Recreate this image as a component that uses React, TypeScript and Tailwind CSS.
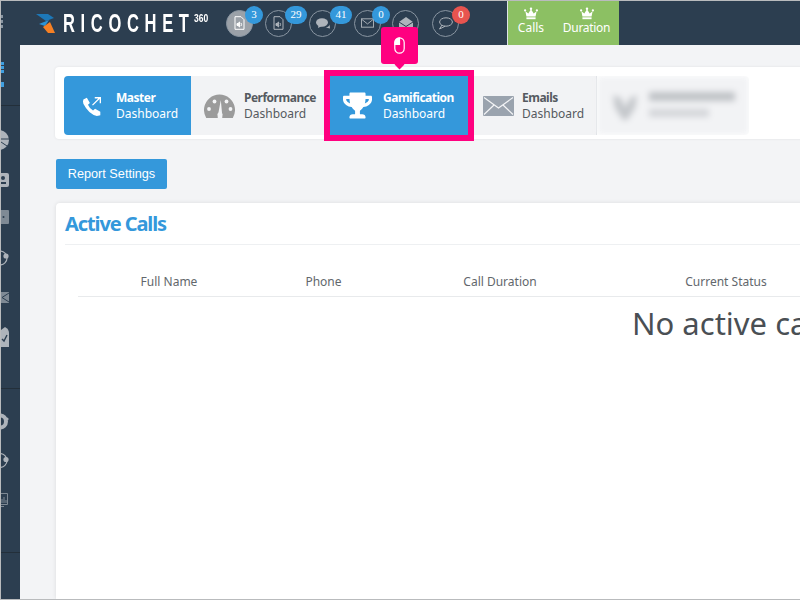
import { FaTrophy } from "react-icons/fa";

const asap = "font-['Noto_Sans',sans-serif]";

function Crown() {
  return (
    <svg width="14" height="13" viewBox="0 0 15 13" fill="#fff">
      <circle cx="7.5" cy="1.4" r="1.3" />
      <circle cx="1.2" cy="3.2" r="1.2" />
      <circle cx="13.8" cy="3.2" r="1.2" />
      <path d="M1.5 4 L4.6 6.6 L7.5 2 L10.4 6.6 L13.5 4 L12.4 9.6 H2.6 Z" />
      <rect x="2.6" y="10.6" width="9.8" height="2" />
    </svg>
  );
}

function FileAudio({ color }: { color: string }) {
  return (
    <svg width="11" height="14" viewBox="0 0 11 14" fill="none" stroke={color} strokeWidth="1">
      <path d="M1 .7 H7 L10 3.7 V13.3 H1 Z" />
      <path d="M3 7.5 H4 L5.6 6 V11 L4 9.5 H3 Z" fill={color} />
      <path d="M7 7 Q8.2 8.5 7 10" />
    </svg>
  );
}

function Mail({ color }: { color: string }) {
  return (
    <svg width="13" height="10" viewBox="0 0 14 10" fill="none" stroke={color} strokeWidth="1">
      <rect x=".5" y=".5" width="13" height="9" />
      <path d="M.5 .8 L7 6 L13.5 .8" />
    </svg>
  );
}

function OpenMail() {
  return (
    <svg width="14" height="13" viewBox="0 0 14 13" fill="#aeb4bb">
      <path d="M0 5 L7 0 L14 5 V13 H0 Z" />
      <path d="M0 5 L7 9.5 L14 5" fill="none" stroke="#2c3e50" strokeWidth="1" />
    </svg>
  );
}

function Bubbles() {
  return (
    <svg width="14" height="11" viewBox="0 0 14 11" fill="#aeb4bb">
      <ellipse cx="6" cy="4.5" rx="6" ry="4.2" />
      <path d="M2.5 7 L2 10 L6 8 Z" />
      <path d="M9.5 9.5 Q13 9 13.6 6.5 L14 10.5 Z" />
    </svg>
  );
}

function Bubble() {
  return (
    <svg width="15" height="13" viewBox="0 0 15 13" fill="none" stroke="#aeb4bb" strokeWidth="1">
      <ellipse cx="8" cy="5" rx="6.4" ry="4.2" />
      <path d="M4 8 L1.5 12 L7 9.3" />
    </svg>
  );
}

const circles = [
  { gap: "ml-0", active: true, icon: <FileAudio color="#fff" />, badge: "3", badgeClass: "left-[18px] w-[18px] bg-[#3498db]" },
  { gap: "ml-[12px]", icon: <FileAudio color="#aeb4bb" />, badge: "29", badgeClass: "left-[19px] w-[22px] bg-[#3498db]" },
  { gap: "ml-[17px]", icon: <Bubbles />, badge: "41", badgeClass: "left-[20px] w-[22px] bg-[#3498db]" },
  { gap: "ml-[18px]", icon: <Mail color="#aeb4bb" />, badge: "0", badgeClass: "left-[17px] w-[18px] bg-[#3498db]" },
  { gap: "ml-[11px]", icon: <OpenMail /> },
  { gap: "ml-[13px]", icon: <Bubble />, badge: "0", badgeClass: "left-[19px] w-[18px] bg-[#e8544f]" },
];

function Header() {
  return (
    <header className="flex h-[44px] shrink-0 items-stretch bg-[#2c3e50]">
      <div className="flex w-[19px] shrink-0 flex-col items-start gap-[2px] pt-[14px]">
        <span className="h-[3px] w-[2px] bg-[#8995a1]" />
        <span className="h-[3px] w-[2px] bg-[#8995a1]" />
        <span className="h-[3px] w-[2px] bg-[#8995a1]" />
      </div>
      <div className="flex w-[206px] shrink-0 items-center pl-[16px]">
        <svg width="19" height="20" viewBox="0 0 19 20" className="mt-[2px]">
          <path d="M0 0 H12 L18 4 L10 7 Z" fill="#1d78b8" />
          <path d="M3 10 L13 6 L9 12 Z" fill="#2a93d5" />
          <path d="M7 13 L14 8 L19 19 H12 Z" fill="#f58024" />
        </svg>
        <div className="ml-[8px] w-[131px] shrink-0 overflow-visible">
          <span className="block origin-left scale-x-[0.66] font-['Liberation_Sans',sans-serif] text-[25px] leading-none font-bold tracking-[8.6px] whitespace-nowrap text-white">
            RICOCHET
          </span>
        </div>
        <span className="mb-[9px] inline-block origin-left scale-x-[0.85] font-['Liberation_Sans',sans-serif] text-[10px] leading-none font-bold text-white">
          360
        </span>
      </div>
      <div className="flex items-center">
        {circles.map((c, i) => (
          <div
            key={i}
            className={`relative flex size-[27px] items-center justify-center rounded-full border border-[#8995a1] ${c.gap} ${c.active ? "bg-[#9ba1a8]" : ""}`}
          >
            {c.icon}
            {c.badge && (
              <span
                className={`absolute top-[-5px] flex h-[18px] items-center justify-center rounded-full font-['Liberation_Serif',serif] text-[11px] text-white ${c.badgeClass}`}
              >
                {c.badge}
              </span>
            )}
          </div>
        ))}
      </div>
      <div className="ml-[48px] flex h-full border-l border-[#dfe3e6] bg-[#8cc063]">
        <div className={`flex w-[46px] flex-col items-center pt-[6px] ${asap} text-[12px] leading-[15px] text-white`}>
          <Crown />
          <span>Calls</span>
        </div>
        <div className={`flex w-[65px] flex-col items-center pt-[6px] ${asap} text-[12px] leading-[15px] tracking-[-0.3px] text-white`}>
          <Crown />
          <span>Duration</span>
        </div>
      </div>
    </header>
  );
}

function Sidebar() {
  return (
    <aside className="flex w-[19px] shrink-0 flex-col overflow-hidden bg-[#2c3e50]">
      <div className="mt-[17px] flex flex-col gap-[1px]">
        <span className="h-[3px] w-[3px] bg-[#3f9fe0]" />
        <span className="h-[3px] w-[3px] bg-[#3f9fe0]" />
        <span className="h-[3px] w-[3px] bg-[#3f9fe0]" />
      </div>
      <span className="mt-[9px] h-[5px] w-[3px] bg-[#3f9fe0]" />
      <div className="mt-[18px] h-px bg-[#232f3a]" />
      <svg width="8" height="20" viewBox="0 0 8 20" className="mt-[24px]">
        <circle cx="-2" cy="10" r="10" fill="#aeb4bb" />
        <path d="M0 9 H8 M0 12 L6 16" stroke="#2c3e50" strokeWidth="1" />
      </svg>
      <svg width="8" height="14" viewBox="0 0 8 14" className="mt-[23px]">
        <rect x="-3" width="11" height="14" rx="2" fill="#aeb4bb" />
        <circle cx="2" cy="5" r="2" fill="#2c3e50" />
        <path d="M0 11 V9 H5 V11 Z" fill="#2c3e50" />
      </svg>
      <svg width="8" height="14" viewBox="0 0 8 14" className="mt-[23px]">
        <rect x="-3" width="11" height="14" rx="1" fill="#7f8a95" />
        <circle cx="2.5" cy="7" r="1" fill="#2c3e50" />
      </svg>
      <svg width="8" height="16" viewBox="0 0 8 16" className="mt-[26px]">
        <circle cx="-1" cy="8" r="7" fill="none" stroke="#aeb4bb" strokeWidth="1.2" />
        <circle cx="5" cy="6" r="2.6" fill="#aeb4bb" />
      </svg>
      <svg width="8" height="11" viewBox="0 0 8 11" className="mt-[26px]">
        <rect x="-3" width="11" height="11" fill="#7f8a95" />
        <path d="M8 1 L1 5.5 L8 10" fill="none" stroke="#2c3e50" strokeWidth="1" />
      </svg>
      <svg width="8" height="20" viewBox="0 0 8 20" className="mt-[24px]">
        <path d="M0 3 L4 0 Q8 2 8 6 V20 H0 Z" fill="#aeb4bb" />
        <path d="M1 12 L3 14 L6 8" fill="none" stroke="#2c3e50" strokeWidth="1.4" />
      </svg>
      <div className="mt-[41px] h-px bg-[#232f3a]" />
      <svg width="8" height="17" viewBox="0 0 8 17" className="mt-[24px]">
        <circle cx="-1" cy="8.5" r="6" fill="none" stroke="#aeb4bb" strokeWidth="4" />
        <circle cx="6" cy="6" r="1.6" fill="#aeb4bb" />
      </svg>
      <svg width="8" height="17" viewBox="0 0 8 17" className="mt-[22px]">
        <circle cx="-1" cy="8.5" r="7" fill="none" stroke="#aeb4bb" strokeWidth="1.2" />
        <circle cx="5" cy="7.5" r="2.6" fill="#aeb4bb" />
      </svg>
      <svg width="8" height="14" viewBox="0 0 8 14" className="mt-[24px]">
        <path d="M0 .5 H6.5 V11.5 H0 M0 13.5 H3" fill="none" stroke="#7f8a95" strokeWidth="1" />
        <path d="M1 10 V6 M3 10 V4 M5 10 V7" stroke="#7f8a95" strokeWidth="1" />
      </svg>
      <div className="mt-[45px] h-px bg-[#232f3a]" />
    </aside>
  );
}

function PhoneIcon() {
  return (
    <svg width="21" height="20" viewBox="0 0 24 23" fill="#fff">
      <path d="M5.5 2 L9 8 L6.8 10.2 Q8.6 14.6 12.6 16.6 L15 14.6 L21 18 V22 L17 23 Q7.6 21 1.5 9 Q0.6 6 1.5 4 Z" />
      <path d="M12 10.5 L20 2.6 M14.6 2 H21 V8.4" fill="none" stroke="#fff" strokeWidth="1.5" />
    </svg>
  );
}

function GaugeIcon() {
  return (
    <svg width="31" height="24" viewBox="0 0 31 24">
      <path d="M2.2 24 A15.5 15.5 0 1 1 28.8 24 Z" fill="#9b9b9b" />
      <path d="M14.4 19 L16.8 6 L18 19 Z" fill="#f3f4f6" />
      <path d="M13.8 24 L13.4 20 A2.8 2.8 0 0 1 18.6 20 L18.2 24 Z" fill="#f3f4f6" />
      <circle cx="5" cy="15" r="1.9" fill="#f3f4f6" />
      <circle cx="10.5" cy="7.5" r="1.9" fill="#f3f4f6" />
      <circle cx="22.5" cy="7.5" r="1.9" fill="#f3f4f6" />
      <circle cx="26.5" cy="15" r="1.9" fill="#f3f4f6" />
    </svg>
  );
}

function EnvelopeIcon() {
  return (
    <svg width="31" height="20" viewBox="0 0 31 20">
      <rect width="31" height="20" rx="1" fill="#9aa3ae" />
      <path d="M1 1.5 L15.5 12 L30 1.5 M1 18.5 L11 9 M30 18.5 L20 9" fill="none" stroke="#f3f4f6" strokeWidth="1.2" />
    </svg>
  );
}

function Tab({
  icon,
  title,
  active,
  className,
  iconClass,
}: {
  icon: React.ReactNode;
  title: string;
  active?: boolean;
  className: string;
  iconClass: string;
}) {
  return (
    <div className={`flex h-full items-center ${active ? "bg-[#3498db] text-white" : "bg-[#f2f3f5] text-[#555a60]"} ${className}`}>
      <div className={`flex shrink-0 justify-center ${iconClass}`}>{icon}</div>
      <div className={`${asap} text-[12px] leading-[16px] whitespace-nowrap`}>
        <div className="font-bold tracking-[-0.5px]">{title}</div>
        <div>Dashboard</div>
      </div>
    </div>
  );
}

function Tabs() {
  return (
    <div className="h-[72px] w-[900px] rounded-[4px] bg-white pt-[9px] pl-[9px] shadow-[0_0_3px_rgba(0,0,0,0.08)]">
      <div className="flex h-[59px] w-[685px] overflow-hidden rounded-[4px]">
        <Tab active title="Master" icon={<PhoneIcon />} className="w-[127px]" iconClass="w-[52px] pl-[4px]" />
        <Tab title="Performance" icon={<GaugeIcon />} className="w-[133px]" iconClass="w-[53px] pl-[4px]" />
        <Tab active title="Gamification" icon={<FaTrophy size={29} />} className="ml-[6px] w-[138px]" iconClass="w-[53px] pl-[2px]" />
        <Tab title="Emails" icon={<EnvelopeIcon />} className="ml-[6px] w-[123px] border-r border-[#dcdfe3]" iconClass="w-[48px]" />
        <div className="flex flex-1 items-center bg-[#f2f3f5] pl-[16px] blur-[3px]">
          <svg width="24" height="28" viewBox="0 0 24 28" fill="#c4c7cb">
            <path d="M0 3 L8 6 L12 16 L17 6 L24 3 L22 16 L14 28 H10 L2 16 Z" />
          </svg>
          <div className="mb-[3px] ml-[12px] flex flex-col gap-[8px]">
            <span className="h-[9px] w-[86px] bg-[#bfc2c6]" />
            <span className="h-[8px] w-[60px] bg-[#d3d5d9]" />
          </div>
        </div>
      </div>
    </div>
  );
}

function Highlight() {
  return (
    <div className="pointer-events-none absolute top-[26px] left-[323px] flex w-[150px] flex-col items-center">
      <div className="relative flex h-[37px] w-[37px] items-center justify-center rounded-[3px] bg-[#ff0080]">
        <svg width="11" height="17" viewBox="0 0 11 17" fill="none" stroke="#fff" strokeWidth="1.2">
          <rect x=".8" y=".8" width="9.4" height="15.4" rx="4.7" />
          <path d="M5.5 1 A4.5 4.5 0 0 0 1 5.5 V7.5 H5.5 Z" fill="#fff" />
        </svg>
        <span className="absolute bottom-[-4px] left-[15px] size-[7px] rotate-45 bg-[#ff0080]" />
      </div>
      <div className="mt-[6px] h-[71px] w-[150px] border-[6px] border-[#ff0080]" />
    </div>
  );
}

const columns = ["Full Name", "Phone", "Call Duration", "Current Status"];

function ActiveCalls() {
  return (
    <section className="mt-[14px] ml-px min-h-0 w-[900px] flex-1 rounded-t-[4px] bg-white px-[9px] shadow-[0_0_4px_rgba(0,0,0,0.1)]">
      <h2 className="flex h-[42px] items-center border-b border-[#eef0f2] font-['Noto_Sans',sans-serif] text-[20px] font-bold tracking-[-1.1px] text-[#3498db]">
        Active Calls
      </h2>
      <div className="ml-[13px] grid h-[52px] grid-cols-[182px_127px_226px_226px] items-center border-b border-[#e8eaec] pt-[23px]">
        {columns.map((c) => (
          <div key={c} className={`${asap} text-center text-[12px] whitespace-nowrap text-[#62676c]`}>
            {c}
          </div>
        ))}
      </div>
      <div className={`ml-[567px] pt-[4px] ${asap} text-[31px] leading-[44px] whitespace-nowrap text-[#4a4f54]`}>
        No active calls
      </div>
    </section>
  );
}

export default function App() {
  return (
    <div className="relative flex h-[600px] w-[800px] flex-col overflow-hidden border-t border-b border-l border-[#b9bbbd] bg-[#f3f4f6]">
      <Header />
      <div className="flex min-h-0 flex-1">
        <Sidebar />
        <main className="flex min-w-0 flex-1 flex-col pt-[22px] pl-[35px]">
          <Tabs />
          <button className="mt-[20px] ml-px h-[30px] w-[111px] rounded-[2px] bg-[#3498db] pt-[2px] font-['Liberation_Sans',sans-serif] text-[12.7px] text-white">
            Report Settings
          </button>
          <ActiveCalls />
        </main>
      </div>
      <Highlight />
    </div>
  );
}
